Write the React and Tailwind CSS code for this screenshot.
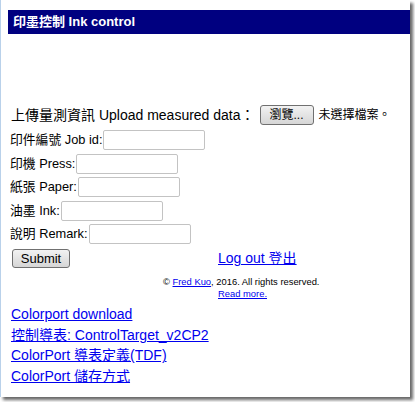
export default function App() {
  const font = { fontFamily: '"Liberation Sans", Arial, "Noto Sans CJK TC", sans-serif' };
  const fields = [
    { label: '印件編號 Job id:' },
    { label: '印機 Press:' },
    { label: '紙張 Paper:' },
    { label: '油墨 Ink:' },
    { label: '說明 Remark:' },
  ];
  const links = [
    'Colorport download',
    '控制導表: ControlTarget_v2CP2',
    'ColorPort 導表定義(TDF)',
    'ColorPort 儲存方式',
  ];

  return (
    <div className="w-[415px] h-[402px] bg-white overflow-hidden" style={font}>
      <div className="w-[410px] h-[397px] bg-white border-l border-[#b9d1ea] shadow-[3px_3px_3px_rgba(0,0,0,0.6)] pl-[9px] pt-[10px] text-black">
        {/* title bar */}
        <div className="-ml-[2px] h-[24px] bg-[#000080] text-white font-bold text-[13px] pl-[5px] flex items-center">
          印墨控制 Ink control
        </div>

        {/* upload */}
        <div className="mt-[71px] h-[20px] flex items-center text-[14px]">
          <span className="ml-[1px]">上傳量測資訊 Upload measured data：</span>
          <button className="ml-[5px] w-[54px] h-[20px] text-[12px] border border-[#707070] rounded-[3px] bg-gradient-to-b from-[#f2f2f2] to-[#d6d6d6] flex items-center justify-center">
            瀏覽...
          </button>
          <span className="ml-[5px] text-[12px]">未選擇檔案。</span>
        </div>

        {/* fields */}
        <div className="mt-[5px] flex flex-col gap-[3.5px]">
          {fields.map((f) => (
            <div key={f.label} className="h-[20px] flex items-center text-[12.8px]">
              <span>{f.label}</span>
              <input
                type="text"
                className="ml-[1px] w-[102px] h-[20px] border border-[#c3c3c3] rounded-[2px] bg-white"
              />
            </div>
          ))}
        </div>

        {/* submit + logout */}
        <div className="mt-[5px] h-[19px] flex items-center">
          <button className="ml-[2px] w-[58px] h-[19px] text-[13px] border border-[#707070] rounded-[3px] bg-gradient-to-b from-[#f2f2f2] to-[#d6d6d6] flex items-center justify-center">
            Submit
          </button>
          <a href="#" className="ml-[148px] text-[14px] text-[#0000ee] underline">
            Log out 登出
          </a>
        </div>

        {/* copyright */}
        <div className="mt-[8px] text-[9.4px] leading-[12px]">
          <div className="ml-[153px]">
            © <a href="#" className="text-[#0000ee] underline">Fred Kuo</a>, 2016. All rights reserved.
          </div>
          <div className="ml-[208px]">
            <a href="#" className="text-[#0000ee] underline">Read more.</a>
          </div>
        </div>

        {/* links */}
        <div className="mt-[4px] flex flex-col text-[14px] leading-[20.7px]">
          {links.map((l) => (
            <div key={l} className="ml-[1px]">
              <a href="#" className="text-[#0000ee] underline">{l}</a>
            </div>
          ))}
        </div>
      </div>
    </div>
  );
}
